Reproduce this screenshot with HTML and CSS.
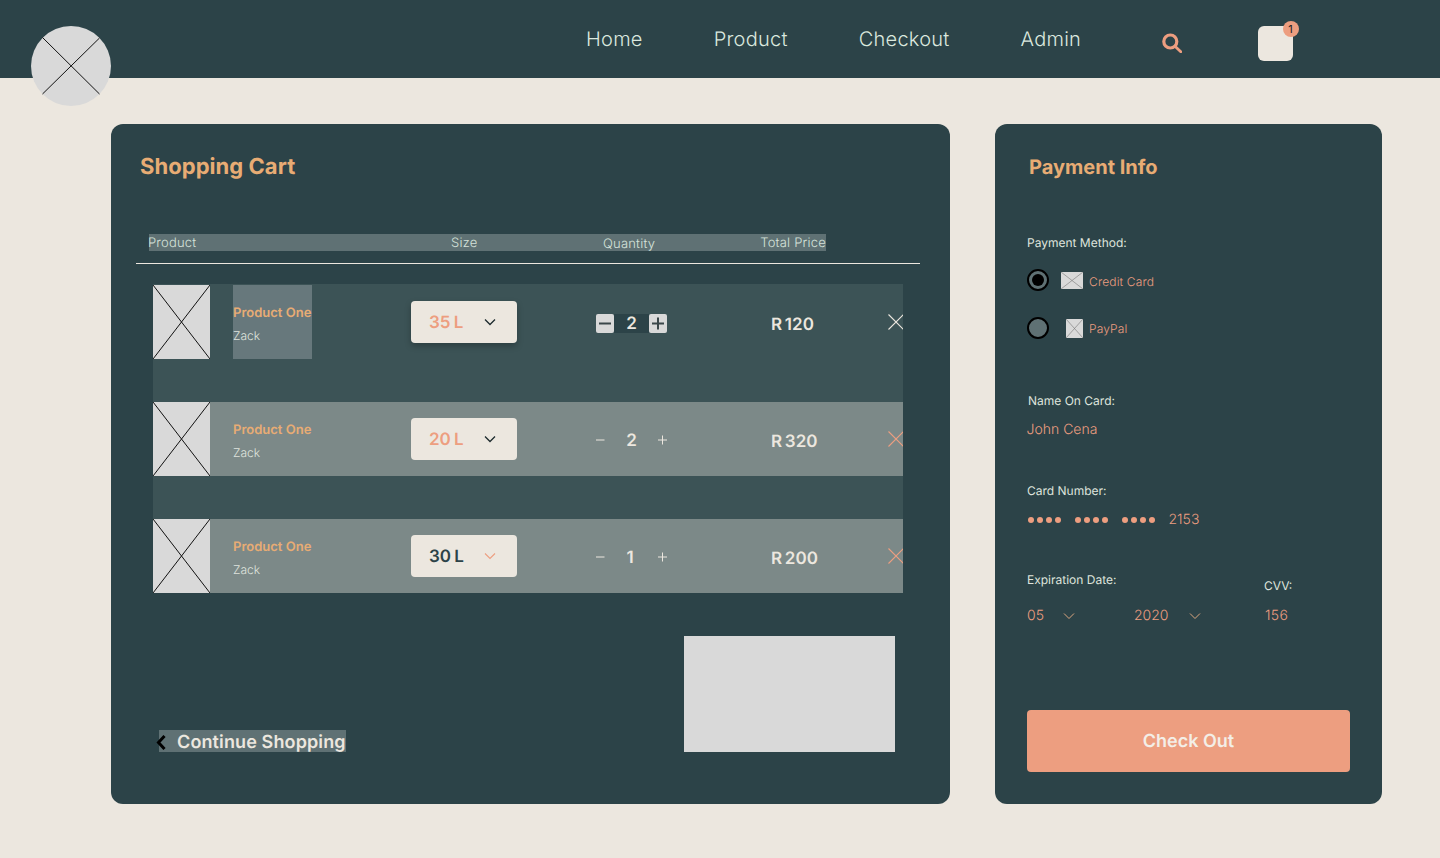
FILE: index.html
```html
<!DOCTYPE html>
<html lang="en">
<head>
    <meta charset="UTF-8">
    <meta name="viewport" content="width=device-width, initial-scale=1.0">
    <title>Shopping Cart</title>
    <link rel="stylesheet" href="styles.css">
</head>
<body>
    <header class="topbar">
        <svg class="logo" viewBox="0 0 80 80">
            <circle cx="40" cy="40" r="40" fill="#d9d9d9"/>
            <path d="M11.500 11.500 L68.500 68 M68.500 12 L11.500 68" stroke="#111" stroke-width="1" fill="none"/>
        </svg>
        <nav class="nav">
            <a href="#">Home</a>
            <a href="#">Product</a>
            <a href="#">Checkout</a>
            <a href="#">Admin</a>
        </nav>
        <svg class="search" viewBox="0 0 20 20">
            <circle cx="8.300" cy="8.500" r="6.500" fill="none" stroke="#ed9e80" stroke-width="3.200"/>
            <path d="M13.500 13.800 L18.800 18.800" stroke="#ed9e80" stroke-width="2.800" stroke-linecap="round"/>
        </svg>
        <div class="cart-btn"><span class="badge">1</span></div>
    </header>

    <main class="page">
        <section class="panel cart">
            <h1 class="title">Shopping Cart</h1>
            <div class="thead">
                <span class="th-product">Product</span>
                <span class="th-size">Size</span>
                <span class="th-qty">Quantity</span>
                <span class="th-price">Total Price</span>
            </div>
            <hr class="rule">
            <div class="rows">
                <div class="row row-first">
                    <svg class="thumb" viewBox="0 0 57 74" preserveAspectRatio="none"><rect width="57" height="74" fill="#d9d9d9"/><path d="M0 0 L57 74 M57 0 L0 74" stroke="#111" stroke-width="1"/></svg>
                    <div class="info info-active">
                        <div class="pname">Product One</div>
                        <div class="pby">Zack</div>
                    </div>
                    <div class="select select-shadow">
                        <span class="sval sval-orange">35 L</span>
                        <svg class="chev" viewBox="0 0 12 8"><path d="M1 1.500 L6 6.500 L11 1.500" fill="none" stroke="#1d2b2e" stroke-width="1.300"/></svg>
                    </div>
                    <div class="qty">
                        <span class="qbtn qbtn-solid"><svg viewBox="0 0 18 19"><path d="M3 9.500 H15" stroke="#3a4649" stroke-width="2"/></svg></span>
                        <span class="qnum qnum-dark">2</span>
                        <span class="qbtn qbtn-solid"><svg viewBox="0 0 18 19"><path d="M3 9.500 H15 M9 3.500 V15.500" stroke="#3a4649" stroke-width="2"/></svg></span>
                    </div>
                    <div class="price">R 120</div>
                    <svg class="close" viewBox="0 0 16 16"><path d="M0.500 0.500 L15.500 15.500 M15.500 0.500 L0.500 15.500" stroke="#ece7df" stroke-width="1.100"/></svg>
                </div>

                <div class="row row-light">
                    <svg class="thumb" viewBox="0 0 57 74" preserveAspectRatio="none"><rect width="57" height="74" fill="#d9d9d9"/><path d="M0 0 L57 74 M57 0 L0 74" stroke="#111" stroke-width="1"/></svg>
                    <div class="info">
                        <div class="pname">Product One</div>
                        <div class="pby">Zack</div>
                    </div>
                    <div class="select">
                        <span class="sval sval-orange">20 L</span>
                        <svg class="chev" viewBox="0 0 12 8"><path d="M1 1.500 L6 6.500 L11 1.500" fill="none" stroke="#1d2b2e" stroke-width="1.300"/></svg>
                    </div>
                    <div class="qty">
                        <span class="qbtn"><svg viewBox="0 0 18 19"><path d="M0 9 H8.500" stroke="#ece7df" stroke-width="1"/></svg></span>
                        <span class="qnum">2</span>
                        <span class="qbtn"><svg viewBox="0 0 18 19"><path d="M9 9 H18 M13.500 4.500 V13.500" stroke="#ece7df" stroke-width="1"/></svg></span>
                    </div>
                    <div class="price">R 320</div>
                    <svg class="close" viewBox="0 0 16 16"><path d="M0.500 0.500 L15.500 15.500 M15.500 0.500 L0.500 15.500" stroke="#ed9e80" stroke-width="1.100"/></svg>
                </div>

                <div class="row row-light row-last">
                    <svg class="thumb" viewBox="0 0 57 74" preserveAspectRatio="none"><rect width="57" height="74" fill="#d9d9d9"/><path d="M0 0 L57 74 M57 0 L0 74" stroke="#111" stroke-width="1"/></svg>
                    <div class="info">
                        <div class="pname">Product One</div>
                        <div class="pby">Zack</div>
                    </div>
                    <div class="select">
                        <span class="sval">30 L</span>
                        <svg class="chev" viewBox="0 0 12 8"><path d="M1 1.500 L6 6.500 L11 1.500" fill="none" stroke="#ed9e80" stroke-width="1.100"/></svg>
                    </div>
                    <div class="qty">
                        <span class="qbtn"><svg viewBox="0 0 18 19"><path d="M0 9 H8.500" stroke="#ece7df" stroke-width="1"/></svg></span>
                        <span class="qnum qnum-left">1</span>
                        <span class="qbtn"><svg viewBox="0 0 18 19"><path d="M9 9 H18 M13.500 4.500 V13.500" stroke="#ece7df" stroke-width="1"/></svg></span>
                    </div>
                    <div class="price">R 200</div>
                    <svg class="close" viewBox="0 0 16 16"><path d="M0.500 0.500 L15.500 15.500 M15.500 0.500 L0.500 15.500" stroke="#ed9e80" stroke-width="1.100"/></svg>
                </div>
            </div>

            <div class="cart-foot">
                <a class="continue" href="#">
                    <svg class="back" viewBox="0 0 10 15"><path d="M8.500 1 L2.500 7.500 L8.500 14" fill="none" stroke="#000" stroke-width="3"/></svg>
                    Continue Shopping
                </a>
                <div class="summary"></div>
            </div>
        </section>

        <section class="panel pay">
            <h2 class="pay-title">Payment Info</h2>
            <div class="label method-label">Payment Method:</div>
            <div class="method">
                <span class="radio radio-on"></span>
                <svg class="card-ico" viewBox="0 0 22 17" preserveAspectRatio="none"><rect width="22" height="17" fill="#d9d9d9"/><path d="M0 0 L22 17 M22 0 L0 17" stroke="#777" stroke-width="0.600"/></svg>
                <span class="method-name method-name-low">Credit Card</span>
            </div>
            <div class="method method-paypal">
                <span class="radio"></span>
                <svg class="paypal-ico" viewBox="0 0 17 19" preserveAspectRatio="none"><rect width="17" height="19" fill="#d9d9d9"/><path d="M0 0 L17 19 M17 0 L0 19" stroke="#777" stroke-width="0.600"/></svg>
                <span class="method-name">PayPal</span>
            </div>

            <div class="label name-label">Name On Card:</div>
            <div class="value name-value">John Cena</div>

            <div class="label number-label">Card Number:</div>
            <div class="value number-value">
                <span class="dots"><i></i><i></i><i></i><i></i></span>
                <span class="dots"><i></i><i></i><i></i><i></i></span>
                <span class="dots"><i></i><i></i><i></i><i></i></span>
                <span>2153</span>
            </div>

            <div class="expiry">
                <div class="exp-col">
                    <div class="label">Expiration Date:</div>
                    <div class="exp-values">
                        <span class="value exp-month">05</span>
                        <svg class="chev-small" viewBox="0 0 12 8"><path d="M1 1.500 L6 6.500 L11 1.500" fill="none" stroke="#dba67f" stroke-width="1"/></svg>
                        <span class="value exp-year">2020</span>
                        <svg class="chev-small" viewBox="0 0 12 8"><path d="M1 1.500 L6 6.500 L11 1.500" fill="none" stroke="#dba67f" stroke-width="1"/></svg>
                    </div>
                </div>
                <div class="cvv-col">
                    <div class="label">CVV:</div>
                    <div class="value cvv-value">156</div>
                </div>
            </div>

            <button class="checkout">Check Out</button>
        </section>
    </main>
</body>
</html>
```

FILE: styles.css
```css
/* Shopping cart page */
* {
    box-sizing: border-box;
}
body {
    margin: 0;
    height: 858px;
    overflow: hidden;
    font-family: Inter, "Liberation Sans", sans-serif;
    text-rendering: geometricPrecision;
    background-color: #ece7df;
}
.topbar {
    position: relative;
    height: 78px;
    background-color: #2c4348;
    display: flex;
    padding-left: 586px;
}
.logo {
    position: absolute;
    left: 31px;
    top: 26px;
    width: 80px;
    height: 80px;
}
.nav {
    display: flex;
    gap: 71px;
    padding-top: 27px;
}
.nav a {
    color: #dbe8df;
    font-size: 20px;
    font-weight: 300;
    line-height: 24px;
    letter-spacing: 0.250px;
    text-decoration: none;
}
.search {
    width: 20px;
    height: 20px;
    margin: 33px 0 0 80.500px;
}
.cart-btn {
    position: relative;
    width: 35px;
    height: 35px;
    margin: 26px 0 0 76px;
    background-color: #ece7df;
    border-radius: 6px;
}
.badge {
    position: absolute;
    top: -5px;
    right: -6px;
    width: 16px;
    height: 16px;
    border-radius: 50%;
    background-color: #ed9e80;
    color: #1d1d1d;
    font-size: 11px;
    line-height: 16px;
    text-align: center;
}

.page {
    display: flex;
    gap: 45px;
    padding: 46px 0 0 111px;
}
.panel {
    height: 680px;
    background-color: #2c4348;
    border-radius: 12px;
}

/* left panel */
.cart {
    width: 839px;
    display: flex;
    flex-direction: column;
    padding: 29px 30px 0 25px;
}
.title {
    height: 27px;
    margin: 0 0 0 4px;
    padding-top: 1px;
    color: #e8ac74;
    font-size: 22px;
    font-weight: 700;
    line-height: 27px;
    letter-spacing: 0.050px;
}
.thead {
    position: relative;
    width: 677px;
    height: 17px;
    margin: 54px 0 0 13px;
    background-color: #5f7174;
    color: #d5e2da;
    font-size: 13px;
    font-weight: 300;
    line-height: 17px;
    letter-spacing: 0.200px;
}
.thead span {
    position: absolute;
    top: 1px;
}
.th-product { left: -1px; }
.th-size { left: 302px; }
.th-qty { left: 454px; top: 2px !important; }
.th-price { right: 0; }
.rule {
    width: 784px;
    height: 1px;
    margin: 12px 0 0;
    border: 0;
    background-color: #ece7df;
}
.rows {
    width: 750px;
    margin: 20px 0 0 17px;
    background-color: #3c5356;
}
.row {
    display: grid;
    grid-template-columns: 57px 201px 185px 175px 117px 15px;
    height: 74px;
    overflow: hidden;
}
.row-first {
    height: 118px;
    padding-top: 1px;
}
.row-light {
    background-color: #7c8988;
}
.row-last {
    margin-top: 43px;
}
.thumb {
    display: block;
    width: 57px;
    height: 74px;
}
.info {
    margin-left: 23px;
    padding-top: 20px;
}
.info-active {
    width: 79px;
    height: 74px;
    background-color: #67787c;
}
.pname {
    color: #e8ac74;
    font-size: 13px;
    font-weight: 600;
    line-height: 16px;
    white-space: nowrap;
}
.pby {
    margin-top: 7px;
    color: #dfe3dd;
    font-size: 12px;
    font-weight: 300;
    line-height: 15px;
}
.select {
    display: flex;
    align-items: center;
    justify-content: space-between;
    width: 106px;
    height: 42px;
    margin-top: 16px;
    padding: 0 21px 0 18px;
    background-color: #ece7df;
    border-radius: 4px;
}
.select-shadow {
    box-shadow: 0 3px 6px rgba(0, 0, 0, 0.25);
}
.sval {
    padding-top: 1px;
    color: #2c4348;
    font-size: 17px;
    font-weight: 600;
    word-spacing: -1px;
}
.sval-orange {
    color: #ed9e80;
}
.chev {
    width: 12px;
    height: 8px;
}
.qty {
    display: flex;
    align-items: center;
    width: 71px;
    height: 19px;
    margin-top: 29px;
}
.qbtn {
    display: block;
    width: 18px;
    height: 19px;
}
.qbtn svg {
    display: block;
    width: 18px;
    height: 19px;
}
.qbtn-solid {
    background-color: #d9d9d9;
    border-radius: 2px;
}
.qnum {
    flex: 1;
    height: 19px;
    color: #ece7df;
    font-size: 17px;
    font-weight: 600;
    line-height: 21px;
    text-align: center;
}
.qnum-dark {
    background-color: #2c4348;
}
.qnum-left {
    padding-right: 3px;
}
.price {
    padding-top: 30px;
    color: #ece7df;
    font-size: 17px;
    font-weight: 600;
    line-height: 20px;
    word-spacing: -1.500px;
    white-space: nowrap;
}
.close {
    width: 16px;
    height: 16px;
    margin-top: 29px;
    overflow: visible;
}
.cart-foot {
    display: flex;
    justify-content: space-between;
    align-items: flex-end;
    width: 736px;
    margin: 43px 0 0 23px;
}
.continue {
    position: relative;
    display: block;
    width: 187px;
    height: 22px;
    padding-left: 18px;
    background-color: #5f7174;
    color: #ece7df;
    font-size: 18px;
    font-weight: 600;
    line-height: 25px;
    letter-spacing: 0.120px;
    text-decoration: none;
    white-space: nowrap;
}
.back {
    position: absolute;
    left: -3px;
    top: 5px;
    width: 10px;
    height: 15px;
}
.summary {
    width: 211px;
    height: 116px;
    background-color: #d9d9d9;
}

/* right panel */
.pay {
    width: 387px;
    padding: 30px 32px 0;
}
.pay-title {
    margin: 0 0 0 2px;
    color: #e8ac74;
    font-size: 20px;
    font-weight: 700;
    line-height: 26px;
}
.label {
    color: #dfe3dd;
    font-size: 12px;
    font-weight: 400;
    line-height: 16px;
    white-space: nowrap;
}
.value {
    color: #ed9e80;
    font-size: 14px;
    font-weight: 300;
    line-height: 18px;
}
.method-label {
    margin-top: 55px;
}
.method {
    display: flex;
    align-items: center;
    height: 22px;
    margin-top: 18px;
}
.method-paypal {
    margin-top: 26px;
}
.radio {
    flex: none;
    display: flex;
    align-items: center;
    justify-content: center;
    width: 22px;
    height: 22px;
    border: 2px solid #000;
    border-radius: 50%;
    background-color: #5f7174;
}
.radio-on::after {
    content: "";
    width: 12px;
    height: 12px;
    border-radius: 50%;
    background-color: #000;
}
.card-ico {
    width: 22px;
    height: 17px;
    margin: 0 6px 0 12px;
}
.paypal-ico {
    width: 17px;
    height: 19px;
    margin: 0 6px 0 17px;
}
.method-name {
    padding-top: 1px;
    color: #ed9e80;
    font-size: 12px;
    font-weight: 300;
    letter-spacing: 0.150px;
}
.method-name-low {
    padding-top: 3px;
}
.name-label {
    margin: 54px 0 0 1px;
}
.name-value {
    margin: 12px 0 0 -0.500px;
}
.number-label {
    margin-top: 44px;
}
.number-value {
    display: flex;
    align-items: center;
    gap: 14px;
    margin-top: 12px;
    padding-left: 0.500px;
}
.dots {
    display: flex;
    gap: 3px;
}
.dots i {
    display: block;
    width: 6px;
    height: 6px;
    border-radius: 50%;
    background-color: #ed9e80;
}
.expiry {
    display: flex;
    margin-top: 43px;
}
.exp-col {
    width: 237px;
}
.exp-values {
    display: flex;
    align-items: center;
    margin-top: 19px;
}
.exp-month {
    width: 36px;
}
.exp-year {
    width: 55px;
    margin-left: 59px;
}
.chev-small {
    width: 12px;
    height: 8px;
}
.cvv-col {
    padding-top: 6px;
}
.cvv-value {
    margin-top: 13px;
    padding-left: 1px;
    letter-spacing: 0.300px;
}
.checkout {
    display: block;
    width: 323px;
    height: 62px;
    margin-top: 85px;
    border: none;
    border-radius: 4px;
    background-color: #ed9e80;
    color: #f3eee7;
    font-family: inherit;
    font-size: 18px;
    font-weight: 600;
    text-rendering: geometricPrecision;
    cursor: pointer;
}
```
